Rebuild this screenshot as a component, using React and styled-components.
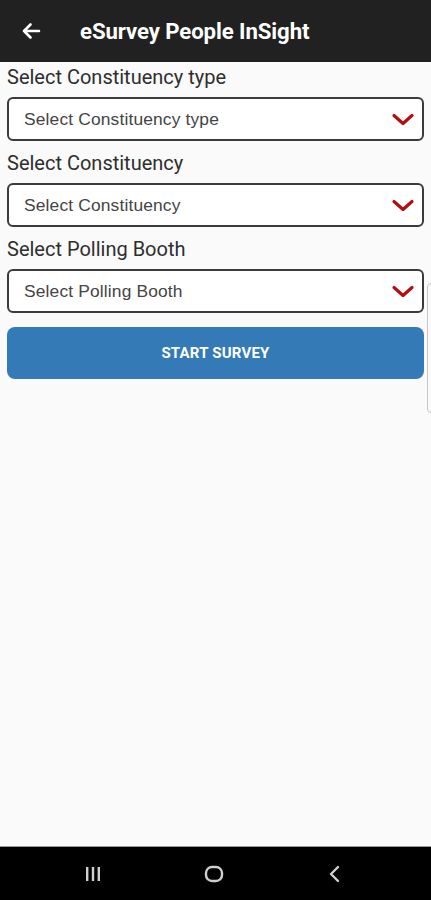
import React from "react";
import styled, { createGlobalStyle } from "styled-components";

const GlobalStyle = createGlobalStyle`
  html, body {
    margin: 0;
    padding: 0;
    background: #fafafa;
    font-family: Roboto, "Liberation Sans", sans-serif;
  }
  * { box-sizing: border-box; }
`;

const Screen = styled.div`
  width: 431px;
  height: 900px;
  display: flex;
  flex-direction: column;
  background: #fafafa;
  position: relative;
  overflow: hidden;
`;

const Header = styled.div`
  height: 62px;
  background: #212121;
  display: flex;
  align-items: center;
  padding-left: 20px;
  gap: 38px;
  flex-shrink: 0;
`;

const BackButton = styled.button`
  border: none;
  background: none;
  padding: 0;
  width: 22px;
  height: 22px;
  display: flex;
  align-items: center;
  justify-content: center;
  color: #fff;
`;

const Title = styled.h1`
  margin: 0;
  color: #fff;
  font-size: 22.2px;
  font-weight: 700;
  letter-spacing: -0.1px;
`;

const Content = styled.div`
  flex: 1;
  padding: 3px 7px 0;
  display: flex;
  flex-direction: column;
`;

const Label = styled.div`
  font-size: 20px;
  line-height: 24px;
  color: #2e2e2e;
  margin-top: ${(p) => (p.first ? "0" : "10px")};
`;

const Select = styled.div`
  margin-top: 8px;
  height: 44px;
  background: #fff;
  border: 2px solid #3a3a3f;
  border-radius: 6px;
  display: flex;
  align-items: center;
  justify-content: space-between;
  padding: 1px 7px 0 15px;
  font-family: "Liberation Sans", Arial, sans-serif;
  font-size: 17.4px;
  letter-spacing: 0.15px;
  color: #444;
`;

const StartButton = styled.button`
  margin-top: 14px;
  height: 52px;
  border: none;
  border-radius: 8px;
  background: #337ab7;
  color: #fff;
  font-family: Roboto, "Liberation Sans", sans-serif;
  font-size: 15px;
  font-weight: 700;
  letter-spacing: 0.2px;
`;

const ScrollHint = styled.div`
  position: absolute;
  right: -6px;
  top: 283px;
  width: 10px;
  height: 130px;
  border: 1px solid #c8c8c8;
  border-radius: 4px;
  background: #fafafa;
`;

const NavBar = styled.div`
  height: 54px;
  background: #000;
  border-top: 1px solid #9a9a9a;
  display: flex;
  align-items: center;
  justify-content: space-between;
  padding: 0 76px 0 73px;
  flex-shrink: 0;
`;

const NavIcon = styled.div`
  width: 40px;
  display: flex;
  justify-content: center;
  color: #cfcfcf;
`;

const Chevron = () => (
  <svg width="24" height="16" viewBox="0 0 24 16" fill="none">
    <path d="M3 3.5l9 8 9-8" stroke="#b40f10" strokeWidth="3.2" strokeLinecap="round" strokeLinejoin="round" />
  </svg>
);

const fields = [
  { label: "Select Constituency type", placeholder: "Select Constituency type" },
  { label: "Select Constituency", placeholder: "Select Constituency" },
  { label: "Select Polling Booth", placeholder: "Select Polling Booth" },
];

export default function App() {
  return (
    <Screen>
      <GlobalStyle />
      <Header>
        <BackButton aria-label="Back">
          <svg width="20" height="18" viewBox="0 0 20 18" fill="none">
            <path d="M18 9H3M9.5 2.5L3 9l6.5 6.5" stroke="#fff" strokeWidth="2.6" strokeLinecap="round" strokeLinejoin="round" />
          </svg>
        </BackButton>
        <Title>eSurvey People InSight</Title>
      </Header>
      <Content>
        {fields.map((f, i) => (
          <React.Fragment key={f.label}>
            <Label first={i === 0}>{f.label}</Label>
            <Select>
              <span>{f.placeholder}</span>
              <Chevron />
            </Select>
          </React.Fragment>
        ))}
        <StartButton>START SURVEY</StartButton>
      </Content>
      <ScrollHint />
      <NavBar>
        <NavIcon>
          <svg width="20" height="18" viewBox="0 0 20 18">
            <rect x="3" y="2" width="2.4" height="14" fill="currentColor" />
            <rect x="8.8" y="2" width="2.4" height="14" fill="currentColor" />
            <rect x="14.6" y="2" width="2.4" height="14" fill="currentColor" />
          </svg>
        </NavIcon>
        <NavIcon>
          <svg width="22" height="20" viewBox="0 0 22 20" fill="none">
            <rect x="3" y="3" width="16" height="14" rx="6" stroke="currentColor" strokeWidth="2.4" />
          </svg>
        </NavIcon>
        <NavIcon>
          <svg width="16" height="20" viewBox="0 0 16 20" fill="none">
            <path d="M11 3L4 10l7 7" stroke="currentColor" strokeWidth="2.4" strokeLinecap="round" strokeLinejoin="round" />
          </svg>
        </NavIcon>
      </NavBar>
    </Screen>
  );
}
